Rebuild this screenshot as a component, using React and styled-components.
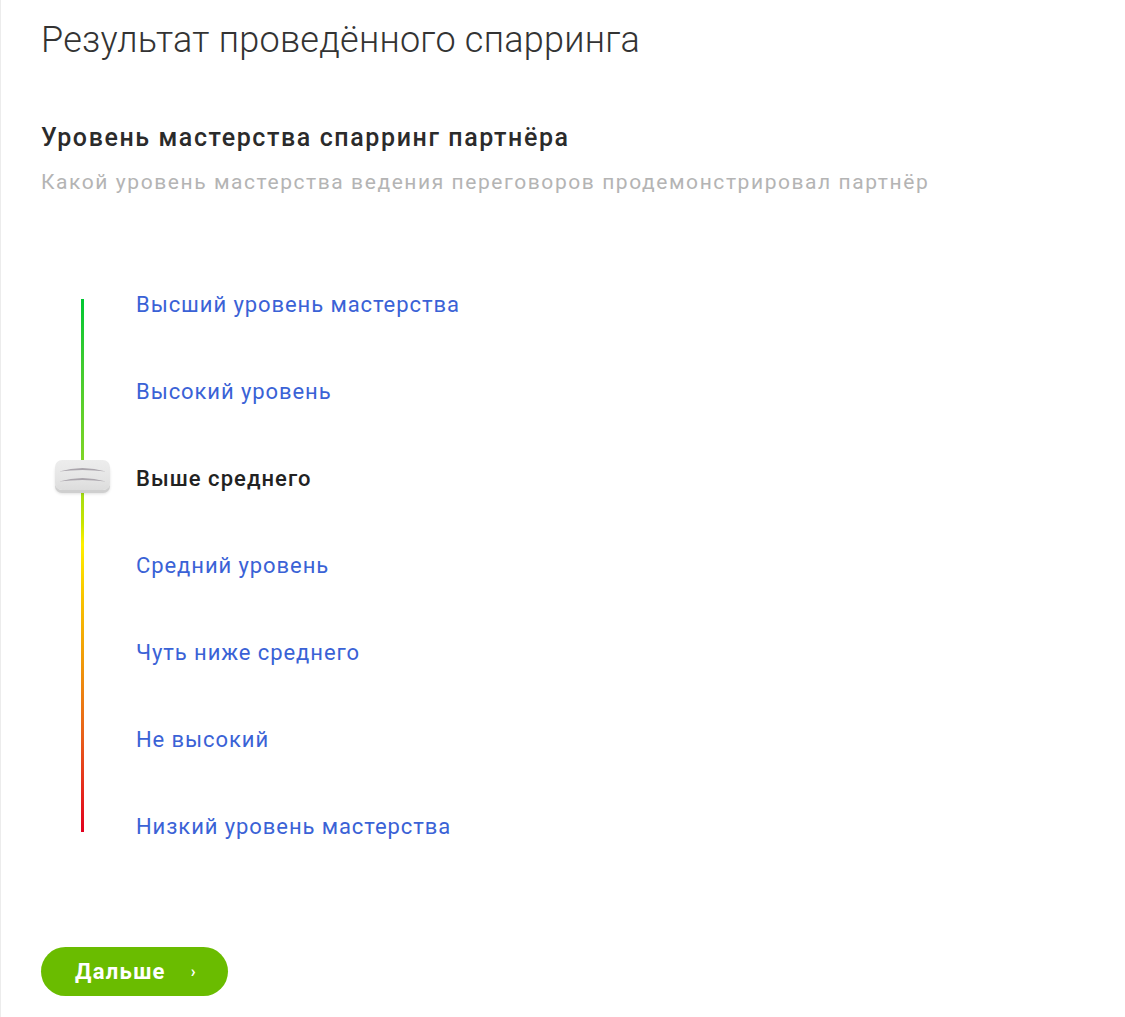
import React, { useState } from 'react';
import styled, { createGlobalStyle } from 'styled-components';

const GlobalStyle = createGlobalStyle`
  html, body {
    margin: 0;
    padding: 0;
    background: #fff;
  }
  body {
    font-family: Roboto, "Liberation Sans", Arial, sans-serif;
  }
`;

const ROW = 87;

const Page = styled.div`
  min-height: 1017px;
  box-sizing: border-box;
  border-left: 1px solid #ececec;
  padding: 18px 0 20px 40px;
`;

const Title = styled.h1`
  margin: 0;
  font-size: 36px;
  line-height: 44px;
  font-weight: 300;
  letter-spacing: 0.25px;
  color: #333;
`;

const Question = styled.h2`
  margin: 61px 0 0;
  font-size: 25px;
  line-height: 30px;
  font-weight: 500;
  letter-spacing: 1.6px;
  color: #2b2b2b;
`;

const Hint = styled.p`
  margin: 16px 0 0;
  font-size: 21px;
  line-height: 26px;
  font-weight: 400;
  letter-spacing: 1.57px;
  color: #b4b4b4;
`;

const Scale = styled.div`
  position: relative;
  margin-top: 66px;
  padding-left: 95px;
`;

const Track = styled.div`
  position: absolute;
  left: 40px;
  top: 38px;
  bottom: 38px;
  width: 3px;
  background: linear-gradient(
    to bottom,
    #00c832 0%,
    #3ecb30 12%,
    #86d625 32%,
    #c8e400 42%,
    #fff000 46%,
    #f8c400 56%,
    #f09a0a 68%,
    #e8601a 82%,
    #e2001e 100%
  );
`;

const Options = styled.div`
  display: flex;
  flex-direction: column;
`;

const OptionRow = styled.div`
  height: ${ROW}px;
  display: flex;
  align-items: center;
`;

const Option = styled.button`
  padding: 0;
  border: 0;
  background: none;
  font-family: inherit;
  font-size: 22px;
  line-height: 28px;
  letter-spacing: ${({ $active }) => ($active ? '1.05px' : '0.92px')};
  font-weight: ${({ $active }) => ($active ? 500 : 400)};
  color: ${({ $active }) => ($active ? '#222' : '#3a62d6')};
  cursor: pointer;
`;

const Handle = styled.div`
  position: absolute;
  left: 14px;
  width: 55px;
  height: 30px;
  box-sizing: border-box;
  border-radius: 7px;
  background: linear-gradient(to bottom, #ededed 0%, #e5e5e5 60%, #dcdcdc 100%);
  box-shadow: 0 3px 0 #cfcfcf, 0 4px 3px rgba(0, 0, 0, 0.12);
  display: flex;
  align-items: center;
  justify-content: center;
`;

const Footer = styled.div`
  margin-top: 77px;
`;

const NextButton = styled.button`
  display: inline-flex;
  align-items: center;
  height: 49px;
  width: 187px;
  padding: 0 0 0 34px;
  box-sizing: border-box;
  border: 0;
  border-radius: 25px;
  background: #6abc00;
  color: #fff;
  font-family: inherit;
  font-size: 22px;
  font-weight: 700;
  letter-spacing: 1.3px;
  cursor: pointer;
`;

const Chevron = styled.span`
  margin-left: 25px;
  font-size: 16px;
  font-weight: 700;
`;

const levels = [
  'Высший уровень мастерства',
  'Высокий уровень',
  'Выше среднего',
  'Средний уровень',
  'Чуть ниже среднего',
  'Не высокий',
  'Низкий уровень мастерства',
];

const App = () => {
  const [selected, setSelected] = useState(2);

  return (
    <>
      <GlobalStyle />
      <Page>
        <Title>Результат проведённого спарринга</Title>
        <Question>Уровень мастерства спарринг партнёра</Question>
        <Hint>Какой уровень мастерства ведения переговоров продемонстрировал партнёр</Hint>
        <Scale>
          <Track />
          <Handle style={{ top: selected * ROW + 25 }}>
            <svg width="49" height="22" viewBox="0 0 49 22">
              <path d="M1 7.5 Q24.5 0.5 48 7.5 Q24.5 4.5 1 7.5Z" fill="#aaa5ac" />
              <path d="M1 17.5 Q24.5 10.5 48 17.5 Q24.5 14.5 1 17.5Z" fill="#aaa5ac" />
            </svg>
          </Handle>
          <Options>
            {levels.map((label, i) => (
              <OptionRow key={label}>
                <Option $active={i === selected} onClick={() => setSelected(i)}>
                  {label}
                </Option>
              </OptionRow>
            ))}
          </Options>
        </Scale>
        <Footer>
          <NextButton>
            Дальше<Chevron>›</Chevron>
          </NextButton>
        </Footer>
      </Page>
    </>
  );
};

export default App;
